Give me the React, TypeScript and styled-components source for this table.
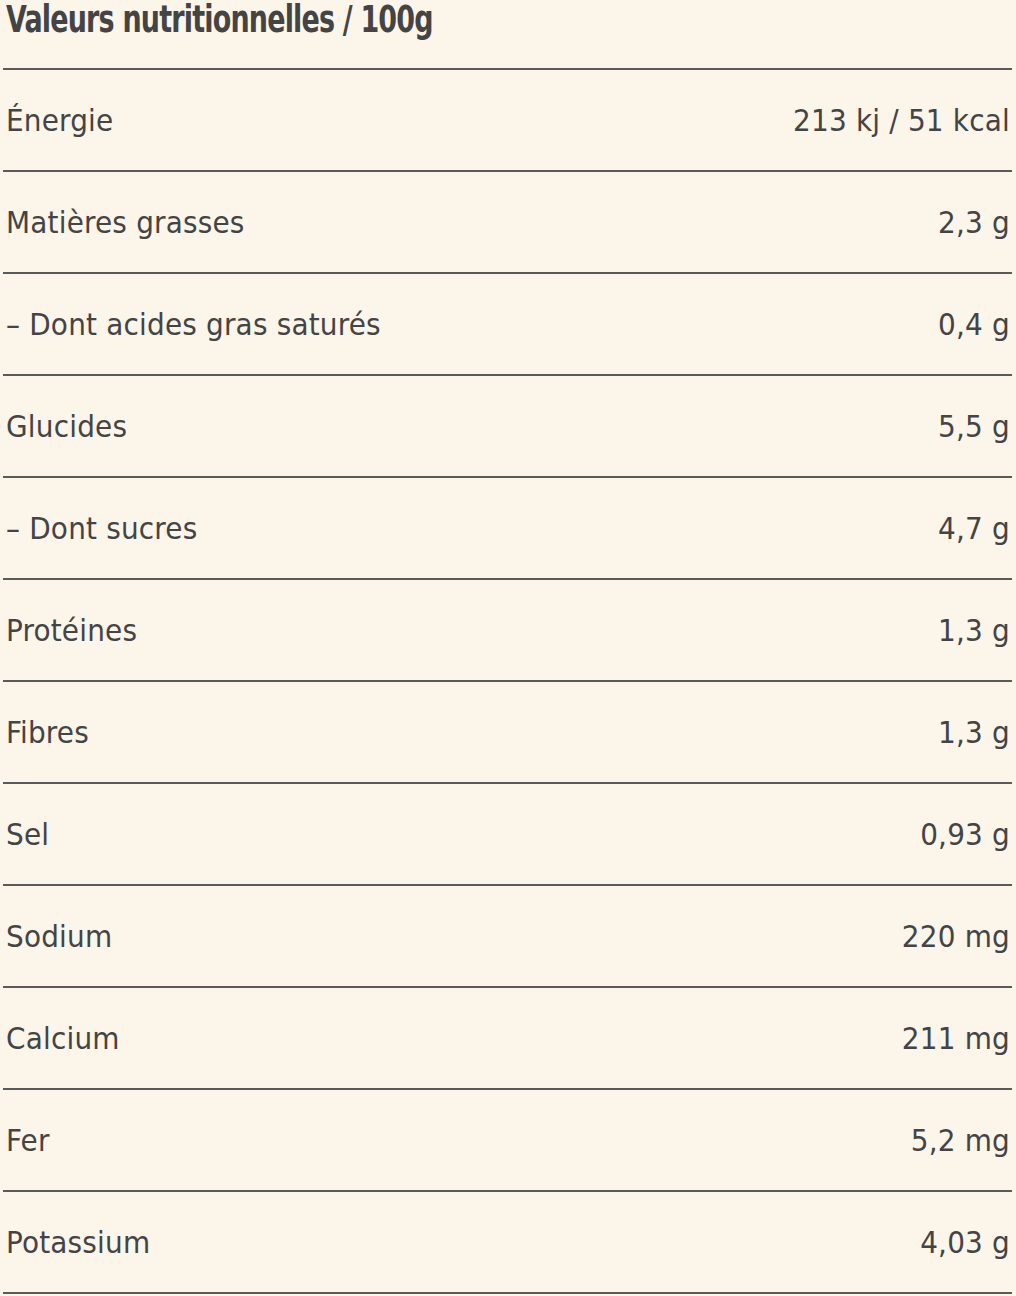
import React from 'react';
import styled, { createGlobalStyle } from 'styled-components';

type Nutrient = {
  label: string;
  value: string;
};

const nutrients: Nutrient[] = [
  { label: 'Énergie', value: '213 kj / 51 kcal' },
  { label: 'Matières grasses', value: '2,3 g' },
  { label: '– Dont acides gras saturés', value: '0,4 g' },
  { label: 'Glucides', value: '5,5 g' },
  { label: '– Dont sucres', value: '4,7 g' },
  { label: 'Protéines', value: '1,3 g' },
  { label: 'Fibres', value: '1,3 g' },
  { label: 'Sel', value: '0,93 g' },
  { label: 'Sodium', value: '220 mg' },
  { label: 'Calcium', value: '211 mg' },
  { label: 'Fer', value: '5,2 mg' },
  { label: 'Potassium', value: '4,03 g' },
];

const GlobalStyle = createGlobalStyle`
  body {
    margin: 0;
    background: #fbf5ea;
    font-family: "DejaVu Sans Condensed", "DejaVu Sans", sans-serif;
    font-stretch: condensed;
    color: #444;
  }
`;

const App = () => {
  return (
    <>
      <GlobalStyle />
      <Table>
        <Title>
          <TitleText>Valeurs nutritionnelles / 100g</TitleText>
        </Title>
        {nutrients.map((n) => (
          <Row key={n.label}>
            <Cell>{n.label}</Cell>
            <Cell>{n.value}</Cell>
          </Row>
        ))}
      </Table>
    </>
  );
};

const Table = styled.div`
  width: 1009px;
  margin-left: 3px;
  border-bottom: 2px solid #5a5a5a;
`;

const Title = styled.div`
  height: 68px;
  padding-left: 3px;
  font-size: 37px;
  font-weight: 700;
  line-height: 40px;
  color: #444;
`;

const TitleText = styled.span`
  display: inline-block;
  white-space: nowrap;
  letter-spacing: -1px;
  transform: scaleX(0.81);
  transform-origin: left center;
`;

const Row = styled.div`
  height: 100px;
  display: flex;
  justify-content: space-between;
  align-items: center;
  padding: 0 2px 0 3px;
  border-top: 2px solid #5a5a5a;
`;

const Cell = styled.span`
  font-size: 31px;
  letter-spacing: 0.2px;
  white-space: nowrap;
`;

export default App;
